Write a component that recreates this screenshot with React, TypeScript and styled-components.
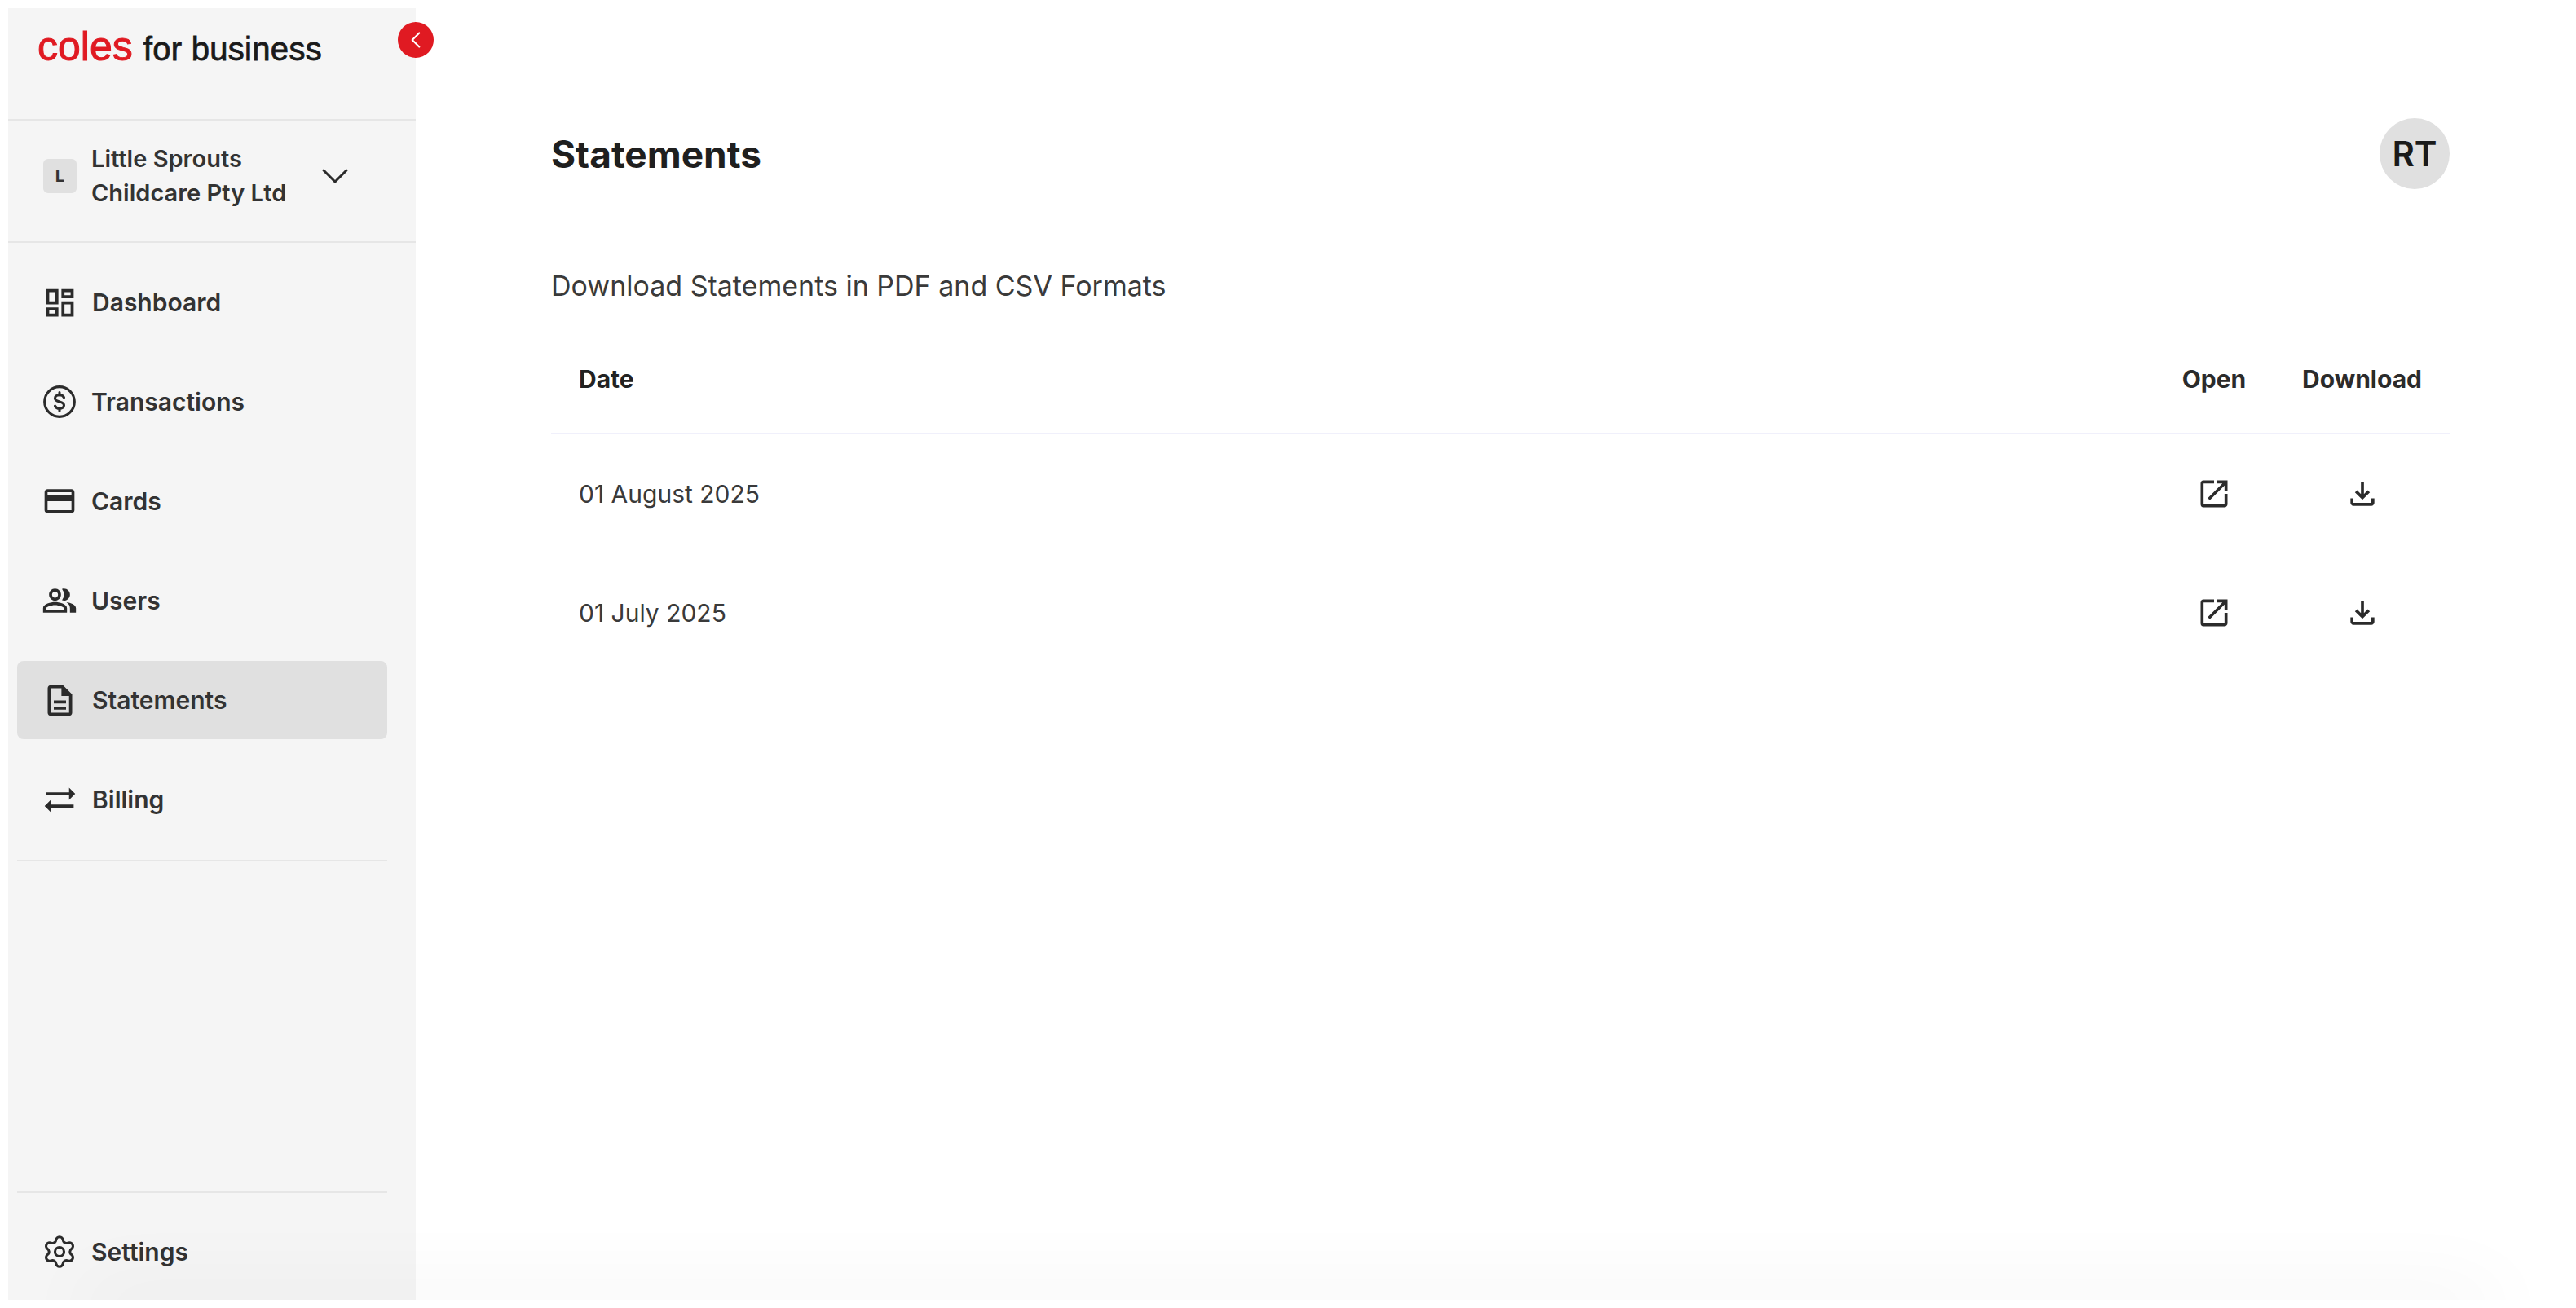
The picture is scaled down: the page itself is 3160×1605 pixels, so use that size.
import styled, {createGlobalStyle} from 'styled-components';
import {ReactNode} from 'react';
import {
	MdOutlineDashboard,
	MdOutlineCreditCard,
	MdOutlinePeopleAlt,
	MdOutlineDescription,
	MdOutlineOpenInNew,
	MdSyncAlt,
	MdOutlineFileDownload,
} from 'react-icons/md';
import {ChevronDown, ChevronLeft, Settings} from 'lucide-react';

interface INavItem {
	label: string;
	icon: ReactNode;
	active?: boolean;
}

const FONT = `Inter, 'Open Sans', sans-serif`;

const GlobalStyle = createGlobalStyle`
	html, body {
		margin: 0;
		padding: 0;
		background: #fff;
	}
	body {
		font-family: ${FONT};
		color: #333;
	}
`;

const Frame = styled.div`
	position: relative;
	display: flex;
	box-sizing: border-box;
	width: 3160px;
	height: 1595px;
	padding: 10px 0 0 10px;
	overflow: hidden;
	&::after {
		content: '';
		position: absolute;
		left: 100px;
		right: 100px;
		top: 100%;
		height: 20px;
		box-shadow: 0 0 100px 0 rgba(0, 0, 0, 0.12);
		pointer-events: none;
	}
`;

const Sidebar = styled.aside`
	position: relative;
	display: flex;
	flex-direction: column;
	flex: 0 0 500px;
	background: #f5f5f5;
`;

const LogoBar = styled.div`
	display: flex;
	align-items: baseline;
	gap: 13px;
	box-sizing: border-box;
	height: 138px;
	padding: 18px 0 0 36px;
	border-bottom: 2px solid #e6e6e6;
	font-family: 'Liberation Sans', Arial, sans-serif;
`;

const LogoMain = styled.span`
	font-size: 50px;
	-webkit-text-stroke: 1px #e01a22;
	color: #e01a22;
`;

const LogoSub = styled.span`
	font-size: 40px;
	letter-spacing: 0.3px;
	-webkit-text-stroke: 0.8px #1a1a1a;
	color: #1a1a1a;
`;

const CollapseButton = styled.button`
	position: absolute;
	top: 17px;
	left: 478px;
	display: flex;
	align-items: center;
	justify-content: center;
	width: 44px;
	height: 44px;
	padding: 0;
	border: none;
	border-radius: 50%;
	background: #e01a22;
	color: #fff;
`;

const OrgRow = styled.div`
	display: flex;
	align-items: center;
	box-sizing: border-box;
	height: 150px;
	padding: 0 0 12px 43px;
	border-bottom: 2px solid #e6e6e6;
`;

const OrgBadge = styled.span`
	display: flex;
	align-items: center;
	justify-content: center;
	flex: 0 0 41px;
	height: 42px;
	border-radius: 6px;
	background: #e0e0e0;
	font-size: 20px;
	font-weight: 700;
`;

const OrgName = styled.div`
	width: 271px;
	margin-left: 18px;
	font-size: 29px;
	font-weight: 600;
	line-height: 42px;
	color: #333;
`;

const Nav = styled.nav`
	display: flex;
	flex-direction: column;
	gap: 26px;
	margin: 25px 35px 0 11px;
	padding-bottom: 26px;
	border-bottom: 2px solid #e6e6e6;
`;

const NavRow = styled.a<{$active?: boolean}>`
	display: flex;
	align-items: center;
	gap: 17px;
	box-sizing: border-box;
	height: 96px;
	padding-left: 30px;
	border-radius: 8px;
	background: ${(props) => (props.$active ? '#e0e0e0' : 'transparent')};
	font-size: 30px;
	font-weight: 600;
	color: #333;
`;

const NavIcon = styled.span`
	display: flex;
	align-items: center;
	justify-content: center;
	flex: 0 0 44px;
	height: 46px;
	color: #2b2b2b;
`;

const SidebarFooter = styled.div`
	margin: auto 35px 0 11px;
	padding: 24px 0 11px;
	border-top: 2px solid #e6e6e6;
`;

const Main = styled.main`
	display: flex;
	flex-direction: column;
	flex: 1;
	padding: 0 155px 0 166px;
`;

const TopBar = styled.header`
	display: flex;
	align-items: center;
	justify-content: space-between;
	height: 87px;
	margin-top: 135px;
`;

const Title = styled.h1`
	margin: 0;
	font-size: 46px;
	font-weight: 700;
	color: #1f1f1f;
`;

const Avatar = styled.div`
	display: flex;
	align-items: center;
	justify-content: center;
	width: 86px;
	height: 87px;
	border-radius: 50%;
	background: #e0e0e0;
	font-size: 42px;
	font-weight: 600;
	color: #1a1a1a;
`;

const Subtitle = styled.p`
	margin: 97px 0 0;
	font-size: 34px;
	line-height: 44px;
	color: #3a3a3a;
`;

const Table = styled.div`
	display: flex;
	flex-direction: column;
	margin-top: 26px;
`;

const TableHead = styled.div`
	display: grid;
	grid-template-columns: 1fr 148px 215px;
	align-items: center;
	height: 132px;
	border-bottom: 2px solid #f0f0fb;
	font-size: 30px;
	font-weight: 700;
	color: #222;
`;

const TableRow = styled.div`
	display: grid;
	grid-template-columns: 1fr 148px 215px;
	align-items: center;
	height: 146px;
	font-size: 30px;
	color: #3a3a3a;
`;

const DateCell = styled.div`
	padding-left: 34px;
`;

const CenterCell = styled.div`
	display: flex;
	align-items: center;
	justify-content: center;
	color: #2b2b2b;
`;

function DollarIcon() {
	return (
		<svg width="44" height="44" viewBox="0 0 24 24" fill="none" stroke="currentColor" strokeWidth="1.7" strokeLinecap="round">
			<circle cx="12" cy="12" r="10" />
			<path d="M15 9.2c-.4-1.1-1.5-1.7-3-1.7-1.7 0-3 .8-3 2.2 0 3 6 1.6 6 4.6 0 1.4-1.3 2.2-3 2.2-1.5 0-2.6-.6-3-1.7" />
			<path d="M12 5.8v1.7M12 16.5v1.7" />
		</svg>
	);
}

const navItems: INavItem[] = [
	{label: 'Dashboard', icon: <MdOutlineDashboard size={45} />},
	{label: 'Transactions', icon: <DollarIcon />},
	{label: 'Cards', icon: <MdOutlineCreditCard size={44} />},
	{label: 'Users', icon: <MdOutlinePeopleAlt size={44} />},
	{label: 'Statements', icon: <MdOutlineDescription size={45} />, active: true},
	{label: 'Billing', icon: <MdSyncAlt size={45} />},
];

const statements = ['01 August 2025', '01 July 2025'];

function App() {
	return (
		<Frame>
			<GlobalStyle />
			<Sidebar>
				<LogoBar>
					<LogoMain>coles</LogoMain>
					<LogoSub>for business</LogoSub>
				</LogoBar>
				<CollapseButton>
					<ChevronLeft size={34} strokeWidth={1.5} />
				</CollapseButton>
				<OrgRow>
					<OrgBadge>L</OrgBadge>
					<OrgName>
						Little Sprouts
						<br />
						Childcare Pty Ltd
					</OrgName>
					<ChevronDown size={56} strokeWidth={1.3} color="#2b2b2b" />
				</OrgRow>
				<Nav>
					{navItems.map((item) => (
						<NavRow key={item.label} $active={item.active}>
							<NavIcon>{item.icon}</NavIcon>
							{item.label}
						</NavRow>
					))}
				</Nav>
				<SidebarFooter>
					<NavRow>
						<NavIcon>
							<Settings size={44} strokeWidth={1.7} />
						</NavIcon>
						Settings
					</NavRow>
				</SidebarFooter>
			</Sidebar>
			<Main>
				<TopBar>
					<Title>Statements</Title>
					<Avatar>RT</Avatar>
				</TopBar>
				<Subtitle>Download Statements in PDF and CSV Formats</Subtitle>
				<Table>
					<TableHead>
						<DateCell>Date</DateCell>
						<CenterCell>Open</CenterCell>
						<CenterCell>Download</CenterCell>
					</TableHead>
					{statements.map((date) => (
						<TableRow key={date}>
							<DateCell>{date}</DateCell>
							<CenterCell>
								<MdOutlineOpenInNew size={44} />
							</CenterCell>
							<CenterCell>
								<MdOutlineFileDownload size={44} />
							</CenterCell>
						</TableRow>
					))}
				</Table>
			</Main>
		</Frame>
	);
}

export default App;
